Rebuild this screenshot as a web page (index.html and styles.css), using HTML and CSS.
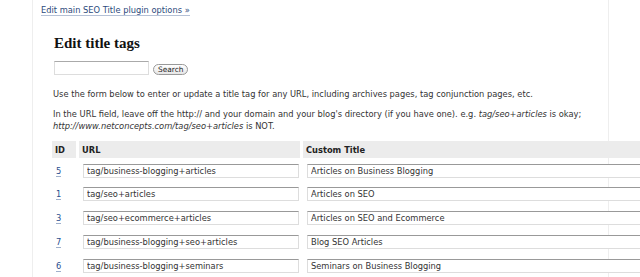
FILE: index.html
```html
<!DOCTYPE html>
<html lang="en">
<head>
  <meta charset="UTF-8" />
  <title>SEO Title Tag</title>
  <link rel="stylesheet" href="styles.css">
</head>
<body>

  <div class="wrap">
    <p class="top-link"><a href="#">Edit main SEO Title plugin options &raquo;</a></p>

    <div class="content">
      <h2>Edit title tags</h2>

      <form class="search-form">
        <input type="text" class="search-field" />
        <button type="button" class="search-btn">Search</button>
      </form>

      <p class="note">Use the form below to enter or update a title tag for any URL, including archives pages, tag conjunction pages, etc.</p>
      <p class="note">In the URL field, leave off the http:// and your domain and your blog's directory (if you have one). e.g. <em>tag/seo+articles</em> is okay; <em>http://www.netconcepts.com/tag/seo+articles</em> is NOT.</p>

      <table class="tags">
        <thead>
          <tr>
            <th class="col-id">ID</th>
            <th class="col-url">URL</th>
            <th class="col-title">Custom Title</th>
          </tr>
        </thead>
        <tbody>
          <tr>
            <td class="col-id"><a href="#">5</a></td>
            <td class="col-url"><input type="text" value="tag/business-blogging+articles" /></td>
            <td class="col-title"><input type="text" value="Articles on Business Blogging" /></td>
          </tr>
          <tr>
            <td class="col-id"><a href="#">1</a></td>
            <td class="col-url"><input type="text" value="tag/seo+articles" /></td>
            <td class="col-title"><input type="text" value="Articles on SEO" /></td>
          </tr>
          <tr>
            <td class="col-id"><a href="#">3</a></td>
            <td class="col-url"><input type="text" value="tag/seo+ecommerce+articles" /></td>
            <td class="col-title"><input type="text" value="Articles on SEO and Ecommerce" /></td>
          </tr>
          <tr>
            <td class="col-id"><a href="#">7</a></td>
            <td class="col-url"><input type="text" value="tag/business-blogging+seo+articles" /></td>
            <td class="col-title"><input type="text" value="Blog SEO Articles" /></td>
          </tr>
          <tr>
            <td class="col-id"><a href="#">6</a></td>
            <td class="col-url"><input type="text" value="tag/business-blogging+seminars" /></td>
            <td class="col-title"><input type="text" value="Seminars on Business Blogging" /></td>
          </tr>
        </tbody>
      </table>
    </div>
  </div>

</body>
</html>
```

FILE: styles.css
```css
* {
  box-sizing: border-box;
}

html, body {
  margin: 0;
  padding: 0;
  background: #fff;
  overflow: hidden;
}

body {
  font-family: 'DejaVu Sans', sans-serif;
  font-size: 8.3px;
  color: #333;
}

.wrap {
  margin-left: 32px;
  width: 577px;
  min-height: 277px;
  border-left: 1px solid #eee;
  border-right: 1px solid #eee;
  padding: 5px 0 0 8px;
}

.top-link {
  margin: 0;
  line-height: 11px;
}

.top-link a {
  color: #2b4a7c;
  text-decoration: none;
  border-bottom: 1px solid #b5c1d6;
}

.content {
  padding-left: 12px;
}

h2 {
  font-family: 'Liberation Serif', serif;
  font-size: 15px;
  font-weight: bold;
  color: #111;
  margin: 18px 0 0 1px;
  line-height: 18px;
}

.search-form {
  display: flex;
  align-items: flex-end;
  gap: 4px;
  margin: 9px 0 0 1px;
}

.search-field {
  width: 95px;
  height: 14px;
  border: 1px solid #ddd;
  border-top-color: #aaa;
  padding: 0;
}

.search-btn {
  height: 11px;
  padding: 0 4px;
  font-family: 'DejaVu Sans', sans-serif;
  font-size: 7.4px;
  line-height: 9px;
  color: #222;
  background: linear-gradient(#fff, #e6e6e6);
  border: 1px solid #999;
  border-radius: 6px;
}

.note {
  margin: 13px 0 0;
  line-height: 12px;
}

.note + .note {
  margin-top: 8px;
}

.tags {
  border-collapse: separate;
  border-spacing: 3px 0;
  margin: 9px 0 0 -4px;
  width: 620px;
}

.tags th {
  background: #ececec;
  text-align: left;
  font-weight: bold;
  color: #222;
  height: 17px;
  padding: 0 0 0 3px;
}

.tags td {
  height: 23.75px;
  padding: 1.5px 0 0 4px;
  vertical-align: middle;
}

.col-id {
  width: 24px;
}

.col-url {
  width: 221px;
}

.tags td.col-id {
  padding-left: 4px;
}

.tags td.col-id a {
  color: #2b4f8f;
  text-decoration: none;
  border-bottom: 1px solid #9fb0cc;
}

.tags td.col-url {
  padding-right: 1px;
}

.tags input {
  display: block;
  width: 100%;
  height: 14px;
  border: 1px solid #ddd;
  border-top-color: #999;
  padding: 0 0 0 3px;
  font-family: 'DejaVu Sans', sans-serif;
  font-size: 8.3px;
  color: #333;
}

.tags td.col-title input {
  width: 340px;
}
```
